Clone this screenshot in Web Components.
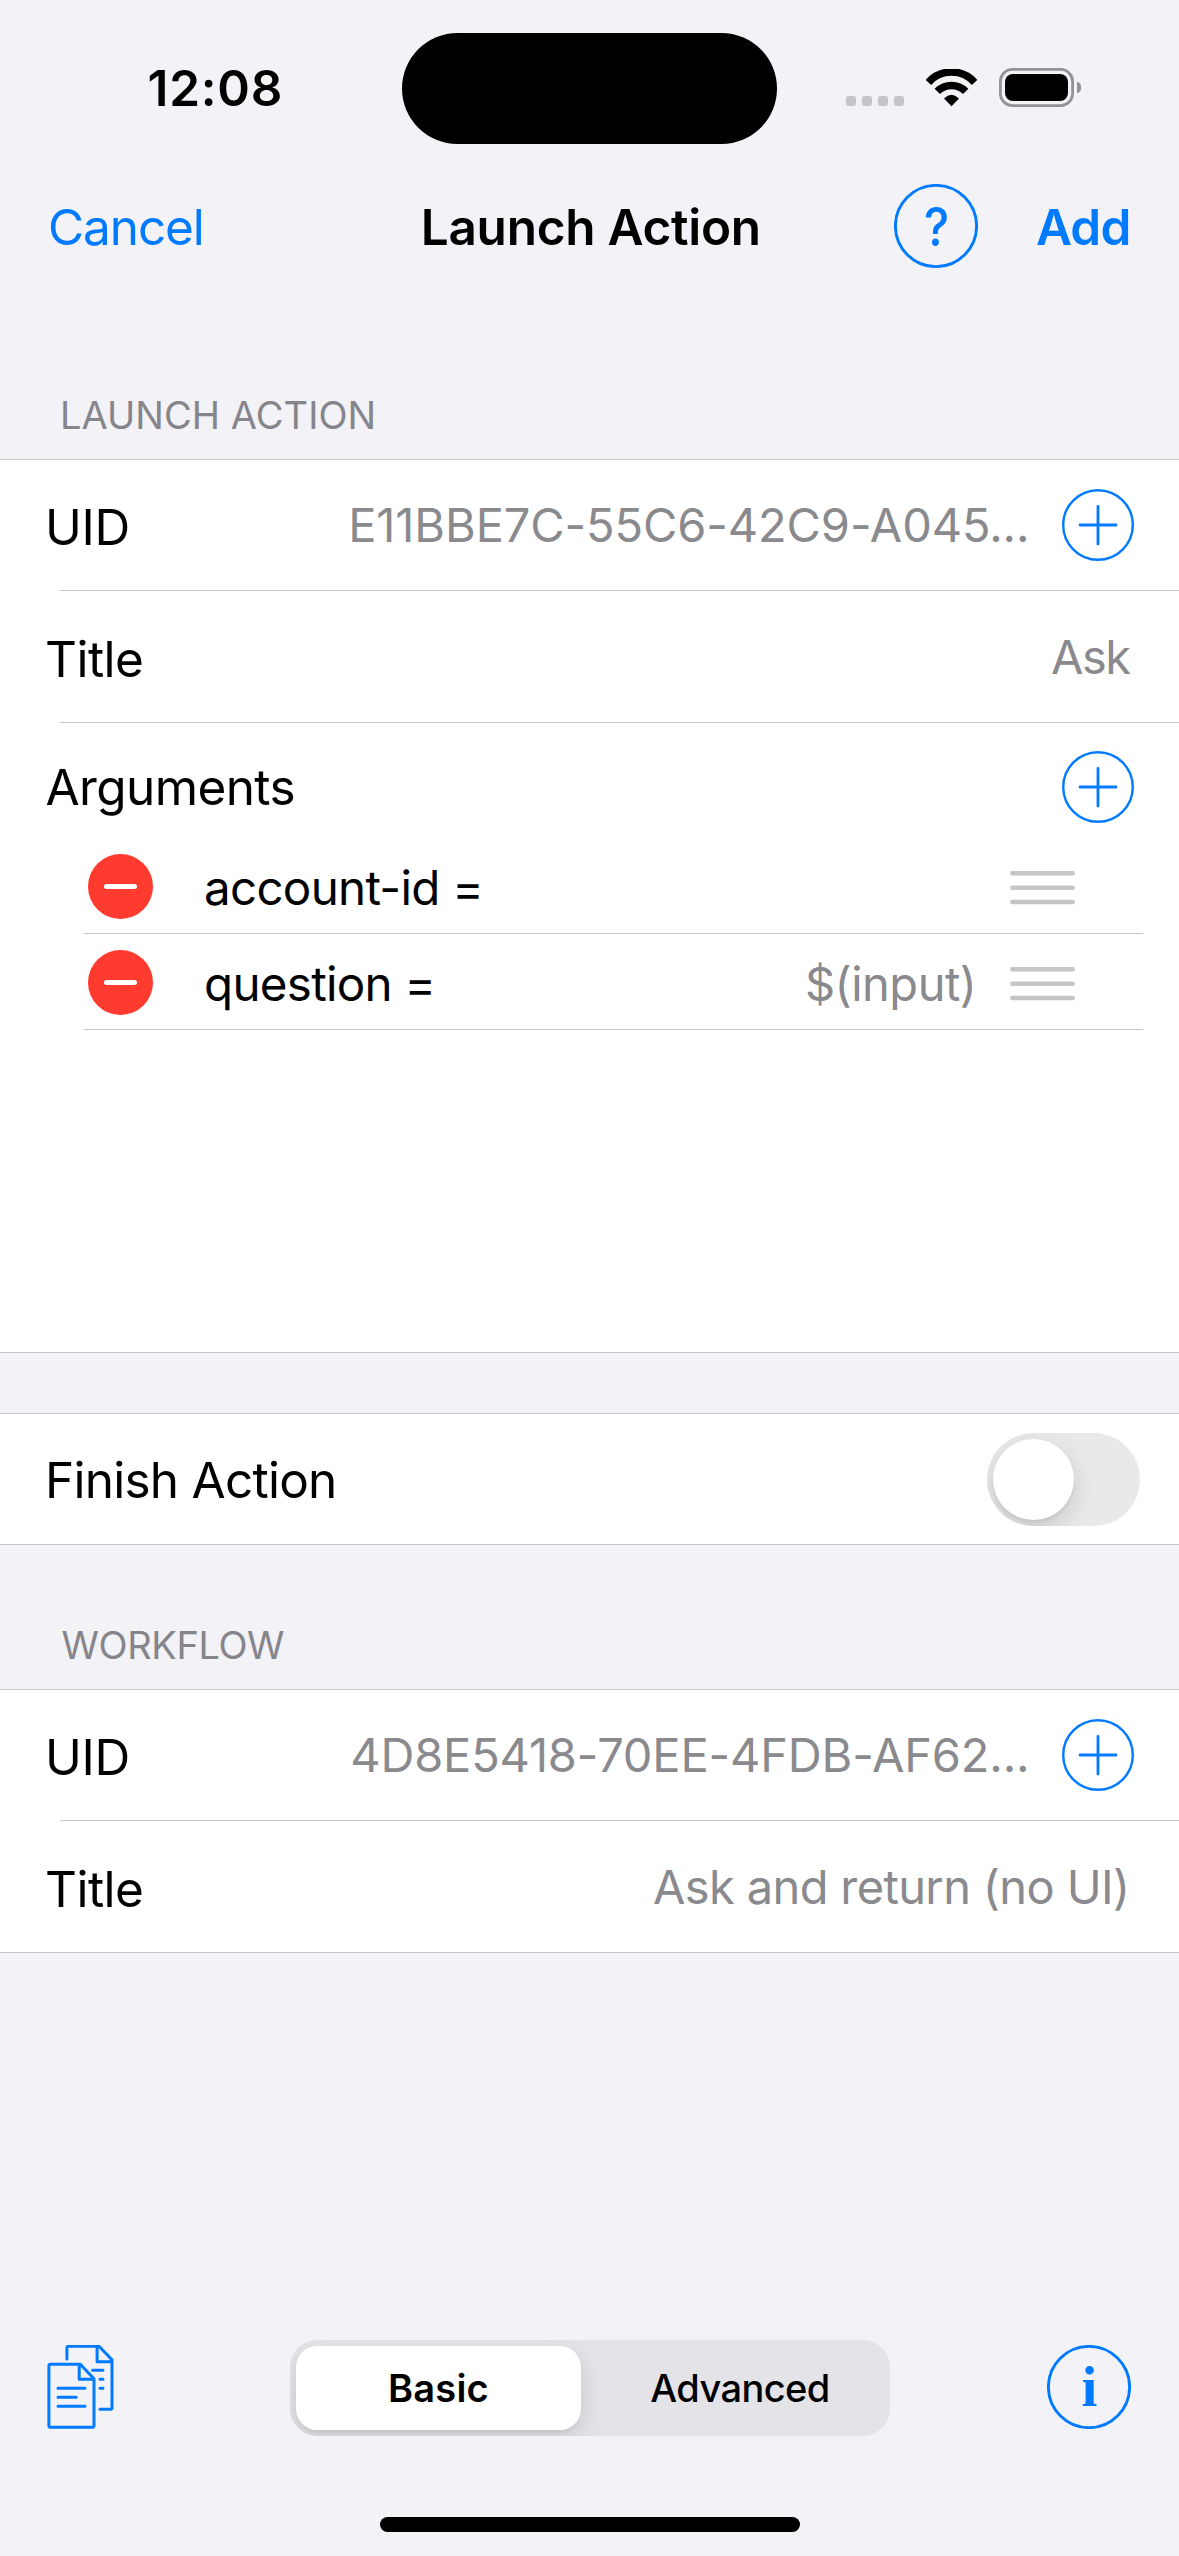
<!DOCTYPE html>
<html lang="en">
<head>
<meta charset="utf-8">
<title>Launch Action</title>
<style>
html, body { margin: 0; padding: 0; }
body { width: 1179px; height: 2556px; overflow: hidden; background: #f2f2f7; font-family: Inter, "Liberation Sans", sans-serif; color: #000; }
</style>
</head>
<body>
<app-screen></app-screen>
<script>
const define = (name, render) => customElements.define(name, class extends HTMLElement {
  connectedCallback() {
    if (this.shadowRoot) return;
    const t = document.createElement('template');
    t.innerHTML = render(this);
    this.attachShadow({ mode: 'open' }).append(t.content.cloneNode(true));
  }
});
const attr = (el, name, fallback = '') => el.getAttribute(name) ?? fallback;

define('status-bar', () => `
<style>
:host { display: grid; grid-template-columns: 402px 375px 402px; align-items: center; height: 111px; padding: 33px 0 24px; }
.time { padding-left: 147.5px; font-size: 49.5px; font-weight: 600; line-height: 60px; letter-spacing: .75px; margin-top: -2px; }
.island { height: 111px; border-radius: 55.5px; background: #000; }
.right { display: flex; align-items: center; padding-left: 69px; gap: 22px; margin-top: -2px; }
.dots { display: flex; gap: 6px; margin-top: 26px; }
.dots i { width: 10px; height: 10px; border-radius: 3px; background: #c4c3c8; }
svg { display: block; }
</style>
<div class="time">12:08</div>
<div class="island"></div>
<div class="right">
  <div class="dots"><i></i><i></i><i></i><i></i></div>
  <svg width="51" height="38" viewBox="0 0 51 38" fill="none" stroke="#000" stroke-width="7.6">
    <path d="M2.4 13.4A31 31 0 0 1 48.6 13.4"/>
    <path d="M11.3 22.4A20 20 0 0 1 39.7 22.4"/>
    <path d="M18 29.4Q25.5 22.2 33 29.4L25.5 37.2z" fill="#000" stroke="none"/>
  </svg>
  <svg width="82" height="39" viewBox="0 0 82 39">
    <rect x="1.4" y="1.4" width="72.2" height="36.2" rx="12" fill="none" stroke="#939297" stroke-width="2.8"/>
    <rect x="6" y="6" width="63" height="27" rx="8" fill="#000"/>
    <path d="M78 13.5q4.4 1.9 4.4 6t-4.4 6z" fill="#939297"/>
  </svg>
</div>`);

define('nav-bar', () => `
<style>
:host { display: grid; grid-template-columns: 1fr 340px 1fr; align-items: center; height: 116px; padding: 0 48.5px 0 48px; font-size: 49.5px; line-height: 60px; }
.t { margin-top: 2px; white-space: nowrap; }
.cancel { color: #007aff; letter-spacing: -1.1px; }
.title { font-weight: 600; letter-spacing: -.27px; text-align: center; padding-left: 1.5px; }
.end { display: flex; align-items: center; justify-content: flex-end; gap: 57.5px; color: #007aff; }
.add { font-weight: 600; letter-spacing: -.83px; }
</style>
<div class="t cancel">Cancel</div>
<div class="t title">Launch Action</div>
<div class="end"><circle-icon kind="help"></circle-icon><span class="t add">Add</span></div>`);

define('circle-icon', el => {
  const kind = attr(el, 'kind');
  const size = kind === 'plus' ? 72 : 84;
  const art = {
    plus: '<circle cx="36" cy="36" r="34.8" stroke-width="2.4"/><path d="M18 36h36M36 17.5v37.5" stroke-width="2.8" stroke-linecap="round"/>',
    help: '<circle cx="42" cy="42" r="40.6" stroke-width="2.9"/><text transform="translate(42.6 62) scale(.9 1)" text-anchor="middle" font-size="53" font-weight="450" font-family="Inter">?</text>',
    info: '<circle cx="42" cy="42" r="40.6" stroke-width="2.9"/><text x="42.4" y="61" text-anchor="middle" font-size="57" font-weight="700" font-family="Liberation Serif">i</text>'
  }[kind];
  return `
<style>
:host { display: block; flex: none; width: ${size}px; height: ${size}px; }
svg { display: block; fill: none; stroke: #007aff; }
text { fill: #007aff; stroke: none; }
</style>
<svg width="${size}" height="${size}" viewBox="0 0 ${size} ${size}">${art}</svg>`;
});

define('section-header', () => `
<style>
:host { display: flex; align-items: flex-end; box-sizing: border-box; padding: 0 60px 21px; color: #85858b; font-size: 38px; line-height: 46px; }
</style>
<slot></slot>`);

define('form-group', () => `
<style>
:host { display: flex; flex-direction: column; background: #fff; border-top: 1px solid #c6c6c8; border-bottom: 1px solid #c6c6c8; }
</style>
<slot></slot>`);

define('row-separator', () => `
<style>:host { display: block; height: 1px; margin-left: 60px; background: #c6c6c8; }</style>`);

define('form-row', el => `
<style>
:host { display: flex; align-items: center; height: 130px; padding: 0 45px 0 45px; }
.label { flex: 1; font-size: 49.5px; line-height: 60px; padding-top: var(--label-drop, 4px); letter-spacing: ${attr(el, 'tracking', '0')}px; white-space: nowrap; }
.value { font-size: 47px; line-height: 58px; color: #8a8a8e; letter-spacing: ${attr(el, 'value-tracking', '0')}px; white-space: nowrap; }
</style>
<div class="label">${attr(el, 'label')}</div>
<div class="value">${attr(el, 'value')}</div>
<slot></slot>`);

define('toggle-switch', () => `
<style>
:host { display: flex; align-items: center; box-sizing: border-box; width: 153px; height: 93px; padding: 0 6px; border-radius: 46.5px; background: #e9e9eb; overflow: hidden; }
i { width: 81px; height: 81px; border-radius: 50%; background: #fff; box-shadow: 0 9px 24px rgba(0,0,0,.15), 0 3px 3px rgba(0,0,0,.05); }
</style>
<i></i>`);

define('argument-row', el => `
<style>
:host { display: flex; align-items: center; height: 95px; margin: 0 36px 0 84px; padding: 0 68.5px 0 4px; border-bottom: 1px solid #c6c6c8; }
svg { display: block; flex: none; }
.remove { margin-top: 2px; }
.name { flex: 1; margin: 4px 0 0 51px; font-size: 47.5px; line-height: 58px; letter-spacing: -.7px; white-space: nowrap; }
.value { margin: 4px 33px 0 0; font-size: 47px; line-height: 58px; letter-spacing: -.49px; color: #8a8a8e; }
.grip { margin-top: 4px; }
</style>
<svg class="remove" width="65" height="65" viewBox="0 0 65 65"><circle cx="32.5" cy="32.5" r="32.5" fill="#ff3b30"/><path d="M18.5 32.5h28" stroke="#fff" stroke-width="5" stroke-linecap="round"/></svg>
<div class="name">${attr(el, 'name')}</div>
<div class="value">${attr(el, 'value')}</div>
<svg class="grip" width="65" height="34" viewBox="0 0 65 34"><path d="M2.3 2.3h60.4M2.3 16.7h60.4M2.3 31h60.4" stroke="#c5c5c7" stroke-width="4.4" stroke-linecap="round"/></svg>`);

define('argument-list', () => `
<style>
:host { display: flex; flex-direction: column; height: 629px; }
.head { display: flex; align-items: center; justify-content: space-between; box-sizing: border-box; height: 115px; padding: 13px 45px 0 45.5px; font-size: 49.5px; line-height: 60px; letter-spacing: -.6px; }
</style>
<div class="head"><span>Arguments</span><circle-icon kind="plus"></circle-icon></div>
<slot></slot>`);

define('segmented-control', () => `
<style>
:host { display: flex; box-sizing: border-box; width: 600px; height: 96px; padding: 6px; border-radius: 27px; background: #e3e3e8; overflow: hidden; font-size: 38px; line-height: 84px; text-align: center; }
.on { width: 285px; border-radius: 21px; background: #fff; font-weight: 560; letter-spacing: .2px; box-shadow: 0 9px 24px rgba(0,0,0,.12), 0 3px 3px rgba(0,0,0,.04); }
.off { flex: 1; margin-left: 15px; font-weight: 480; letter-spacing: -.6px; }
</style>
<div class="on">Basic</div><div class="off">Advanced</div>`);

define('tool-bar', () => `
<style>
:host { display: flex; align-items: center; height: 96px; padding: 0 48px 0 47px; }
svg { display: block; fill: none; stroke: #007aff; stroke-width: 3; stroke-linecap: round; stroke-linejoin: round; margin: 0 176px 2px 0; }
circle-icon { margin: 0 0 2px auto; }
</style>
<svg width="67" height="84" viewBox="0 0 67 84">
  <path d="M19.9 14V2.8q0-1.5 1.5-1.5H52L65 14.9V62.8q0 1.5-1.5 1.5H53M50.1 1.5V16.7H65M45.5 25.3H56M53 34.3h3M53 43.3h3"/>
  <path d="M33.3 19.3H3.4q-1.5 0-1.5 1.5V80.8q0 1.5 1.5 1.5H45.5q1.5 0 1.5-1.5V33.7zM32.2 20V34.3H47M11 43.3H38M11 52.3H29.3M11 61.3H38"/>
</svg>
<segmented-control></segmented-control>
<circle-icon kind="info"></circle-icon>`);

define('home-indicator', () => `
<style>:host { display: block; width: 420px; height: 15px; margin: 81px auto 24px; border-radius: 7.5px; background: #000; }</style>`);

define('app-screen', () => `
<style>
:host { display: flex; flex-direction: column; width: 1179px; height: 2556px; }
.plus { margin-left: 32.5px; }
.first { height: 175px; letter-spacing: .04px; }
.second { height: 144px; padding-left: 61.5px; letter-spacing: -.4px; }
.gap { height: 60px; }
.tall { height: 131px; padding-right: 49.5px; }
.finish { padding-right: 39px; --label-drop: 2px; }
.spacer { flex: 1; }
</style>
<status-bar></status-bar>
<nav-bar></nav-bar>
<section-header class="first">LAUNCH ACTION</section-header>
<form-group>
  <form-row label="UID" tracking="-.31" value="E11BBE7C-55C6-42C9-A045..." value-tracking="-.1"><circle-icon class="plus" kind="plus"></circle-icon></form-row>
  <row-separator></row-separator>
  <form-row class="tall" label="Title" tracking="-.53" value="Ask" value-tracking="-1.5"></form-row>
  <row-separator></row-separator>
  <argument-list>
    <argument-row name="account-id ="></argument-row>
    <argument-row name="question =" value="$(input)"></argument-row>
  </argument-list>
</form-group>
<div class="gap"></div>
<form-group>
  <form-row class="finish" label="Finish Action" tracking="-.75"><toggle-switch></toggle-switch></form-row>
</form-group>
<section-header class="second">WORKFLOW</section-header>
<form-group>
  <form-row label="UID" tracking="-.31" value="4D8E5418-70EE-4FDB-AF62..." value-tracking="-.16"><circle-icon class="plus" kind="plus"></circle-icon></form-row>
  <row-separator></row-separator>
  <form-row class="tall" label="Title" tracking="-.53" value="Ask and return (no UI)" value-tracking="-.63"></form-row>
</form-group>
<div class="spacer"></div>
<tool-bar></tool-bar>
<home-indicator></home-indicator>`);
</script>
</body>
</html>
